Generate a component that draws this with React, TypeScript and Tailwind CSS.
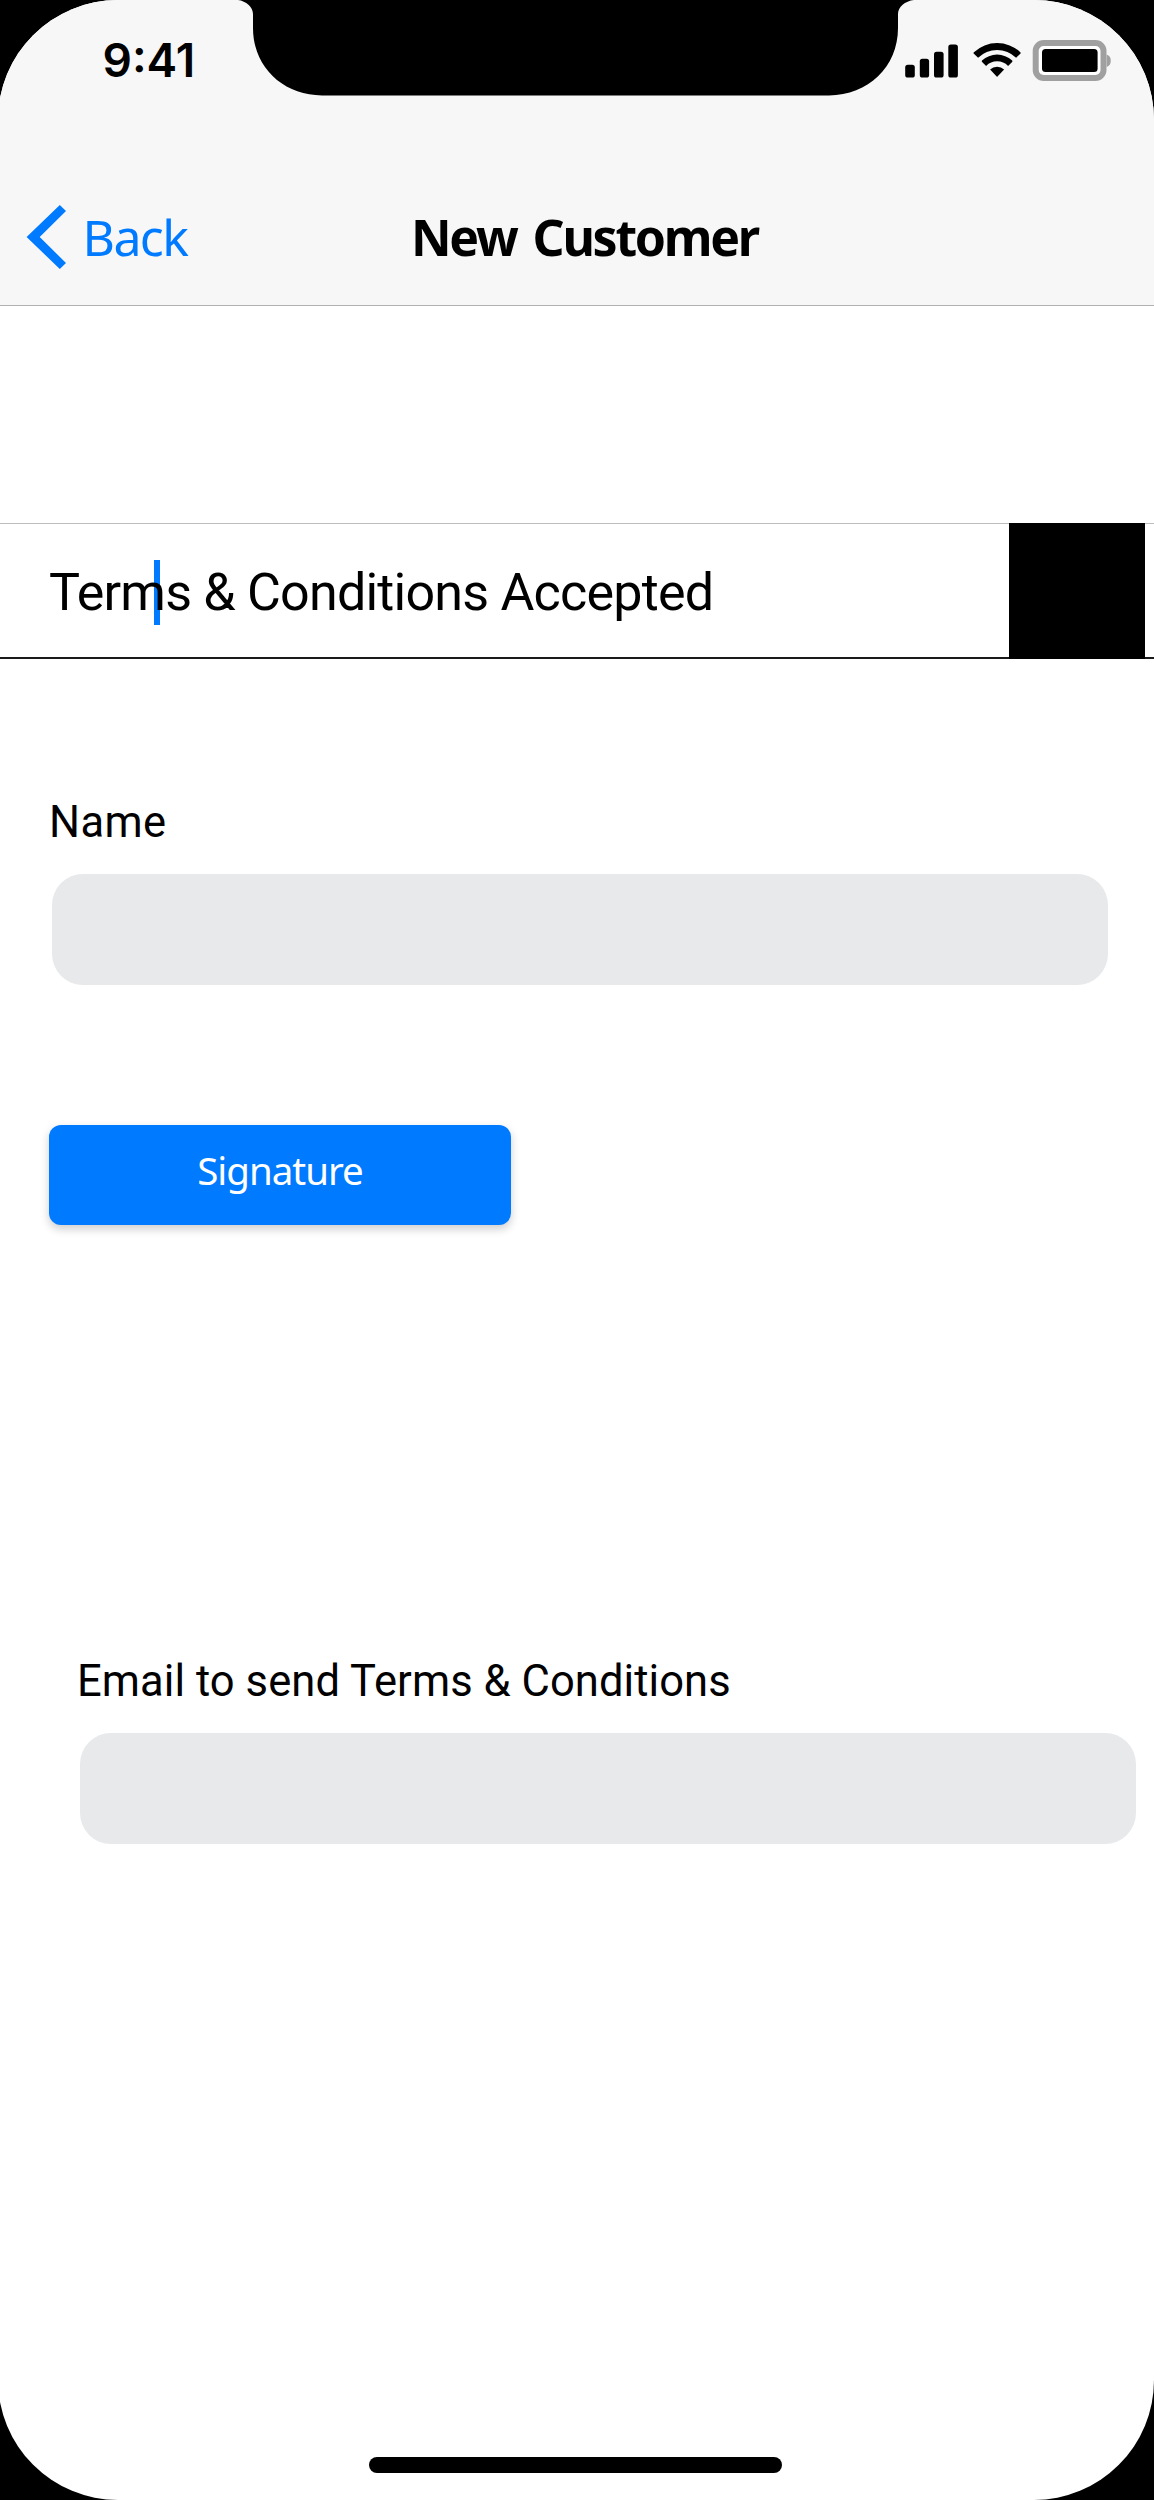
import type { ReactNode } from "react";

function Notch() {
  return (
    <svg className="block h-[96px] w-[660px]" viewBox="238 0 660 96" fill="#000" aria-hidden="true" overflow="visible">
      <path d="M238 0C246 1 253 7 253 14V28C253 67 283 95.4 322 95.4H829C868 95.4 898 67 898 28V14C898 7 905 1 914 0Z" />
    </svg>
  );
}

function SignalIcon() {
  return (
    <svg className="h-[34px] w-[54px]" viewBox="905 43.5 54 34" aria-hidden="true">
      <rect x="905.2" y="64.3" width="9.6" height="12.7" rx="2.6" />
      <rect x="919.8" y="58.2" width="9.3" height="18.8" rx="2.6" />
      <rect x="934" y="51.2" width="9.6" height="25.8" rx="2.6" />
      <rect x="948.3" y="44" width="9.6" height="33" rx="2.6" />
    </svg>
  );
}

function WifiIcon() {
  return (
    <svg className="h-[34px] w-[48px]" viewBox="972.5 43 48 34" aria-hidden="true">
      <path d="M973.4 52.2A34 34 0 0 1 1019.8 52.2Q1020.6 53 1019.8 53.8L1015.6 57.8A27 27 0 0 0 977.6 57.8L973.4 53.8Q972.6 53 973.4 52.2Z" />
      <path d="M981.5 60.5A22.3 22.3 0 0 1 1011.7 60.5Q1012.3 61.2 1011.6 62L1007.6 65.9A15.6 15.6 0 0 0 985.6 65.9L981.6 62Q980.9 61.2 981.5 60.5Z" />
      <path d="M989.6 69.4A10.4 10.4 0 0 1 1003.6 69.4L997 76.6Q996.6 77 996.2 76.6Z" />
    </svg>
  );
}

function BatteryIcon() {
  return (
    <svg className="h-[42px] w-[79px]" viewBox="1032 40 79 42" aria-hidden="true">
      <path d="M1106.6 54.5Q1110.8 56 1110.8 60.7T1106.6 67Z" fill="#a0a0a0" />
      <rect x="1035.7" y="43" width="67.8" height="35" rx="8" fill="#fff" stroke="#a0a0a0" strokeWidth="6" />
      <rect x="1042" y="49" width="55.6" height="23" rx="3.5" />
    </svg>
  );
}

function Field({ label, className, children }: { label: string; className: string; children?: ReactNode }) {
  return (
    <div className={className}>
      <label className="block pt-px font-['Roboto',sans-serif] text-[43.5px] leading-[52px] whitespace-nowrap">
        {label}
      </label>
      <div className="mt-[25px] ml-[3px] h-[111px] w-[1056px] rounded-[31px] bg-[#e8e9eb]">{children}</div>
    </div>
  );
}

export default function App() {
  return (
    <div className="h-[2500px] w-[1154px] overflow-hidden bg-black text-black">
      <div className="relative -ml-[2px] flex h-[2500px] w-[1156px] flex-col overflow-hidden rounded-[120px] bg-white pl-[2px]">
        <header className="-ml-[2px] flex h-[306px] flex-col border-b border-[#b2b2b2] bg-[#f7f7f7] pl-[2px]">
          <div className="relative flex h-[120px] items-start">
            <div className="w-[238px] pt-[36px] pl-[102.5px] font-['Inter',sans-serif] text-[46px] leading-[48px] font-semibold">
              9:41
            </div>
            <Notch />
            <div className="flex h-[120px] items-start pt-[40px] pl-[7px]">
              <div className="pt-[3.5px]"><SignalIcon /></div>
              <div className="ml-[13.5px] pt-[3px]"><WifiIcon /></div>
              <div className="ml-[11.5px]"><BatteryIcon /></div>
            </div>
          </div>
          <div className="flex h-[185px] items-start font-['Noto_Sans',sans-serif]">
            <button className="flex w-[411px] items-start pl-[26px]">
              <svg className="mt-[84px] h-[66px] w-[41px]" viewBox="26 204 41 66" fill="#007aff" aria-hidden="true">
                <path d="M59.8 205L66 211L39.7 237L66 263L59.8 269L26.6 237Z" />
              </svg>
              <span className="mt-[83px] ml-[15.5px] text-[50px] leading-[68px] font-normal tracking-[-1.6px] text-[#007aff]">Back</span>
            </button>
            <h1 className="mt-[83px] text-[50px] leading-[68px] font-bold tracking-[-2.3px] whitespace-nowrap [word-spacing:5.5px]">New Customer</h1>
          </div>
        </header>

        <main className="flex flex-col items-start">
          <div className="mt-[217px] flex h-[136px] w-[1154px] justify-between border-t border-b-2 border-t-[#bdbdbd] border-b-[#1a1a1a]">
            <div className="relative mt-[39px] ml-[49px] font-['Roboto',sans-serif] text-[52px] leading-[60px] tracking-[-0.78px] whitespace-nowrap">
              <span className="absolute top-[-3px] left-[105px] h-[65px] w-[6px] bg-[#007aff]" />
              <span className="relative">Terms &amp; Conditions Accepted</span>
            </div>
            <div className="-mt-px mr-[9px] h-[136px] w-[136px] bg-black" />
          </div>

          <Field label="Name" className="mt-[137px] ml-[49px] tracking-[0.4px]" />

          <button className="mt-[140px] ml-[49px] flex h-[100px] w-[462px] justify-center rounded-[12px] bg-[#007aff] pt-[18px] font-['Noto_Sans',sans-serif] text-[38.5px] leading-[54px] tracking-[-1px] text-white shadow-[0_4px_10px_rgba(0,0,0,0.2)]">
            Signature
          </button>

          <Field label="Email to send Terms & Conditions" className="mt-[430px] ml-[77px] tracking-[0.08px]" />
        </main>

        <div className="mt-auto mb-[27.5px] ml-[369px] h-[15.5px] w-[413px] rounded-full bg-black" />
      </div>
    </div>
  );
}
